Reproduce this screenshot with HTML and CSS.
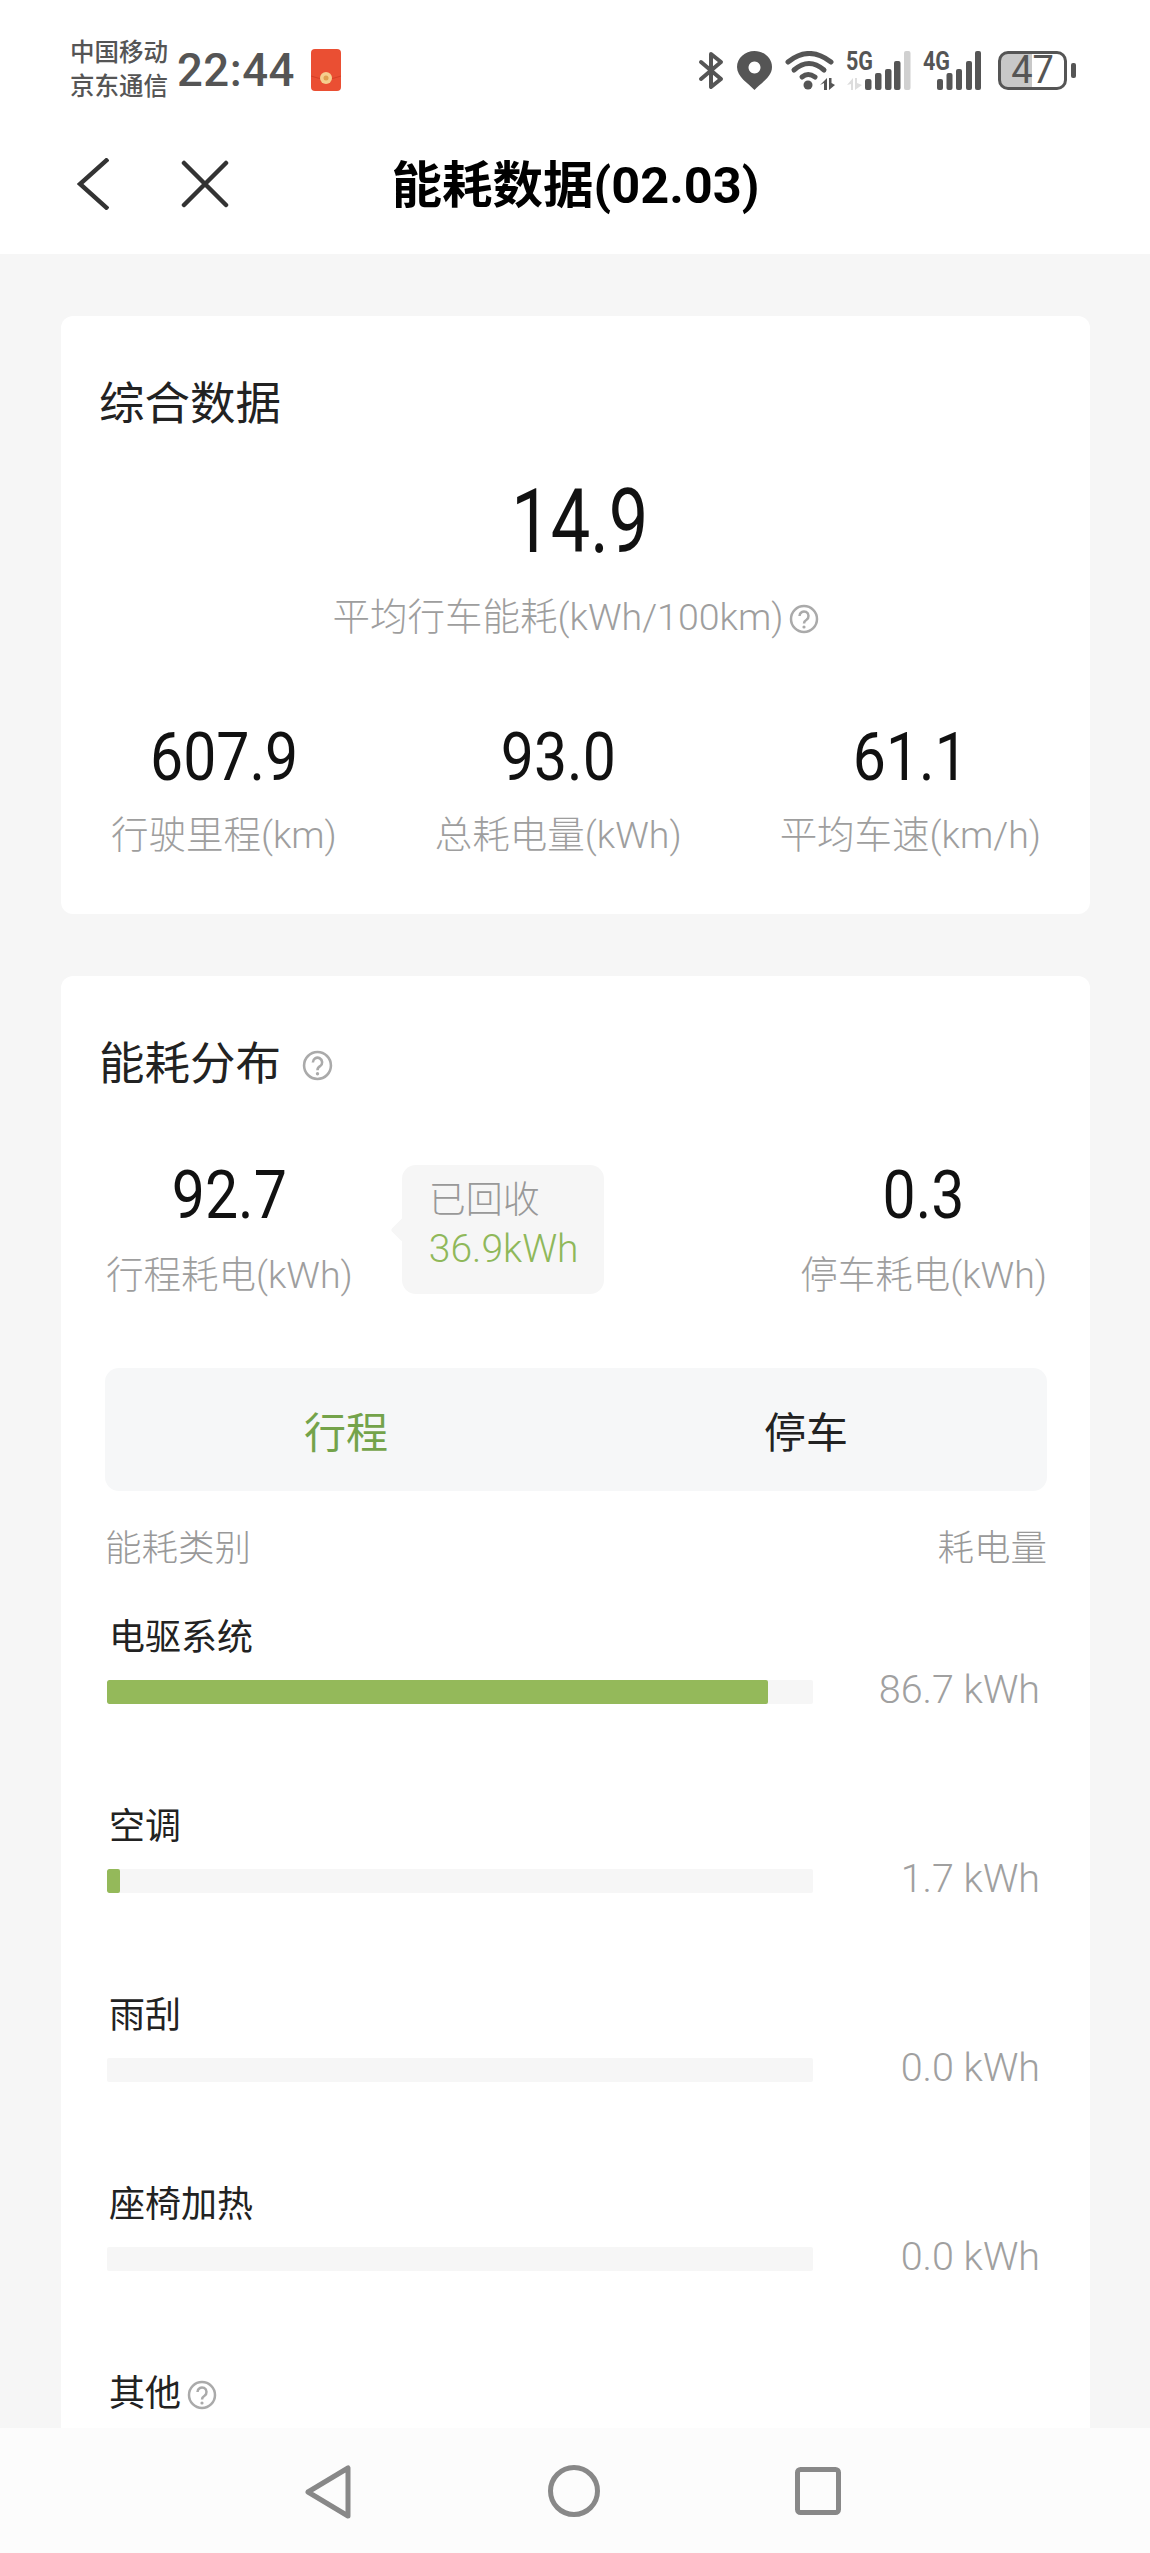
FILE: index.html
```html
<!DOCTYPE html>
<html>
	<head>
		<meta charset="UTF-8">
		<title>能耗数据</title>
		<link rel="stylesheet" href="styles.css">
	</head>
	<body>
		<div class="page">
			<header class="top">
				<div class="statusbar">
					<div class="carrier"><span>中国移动</span><span>京东通信</span></div>
					<div class="time">22:44</div>
					<svg class="envelope" width="30" height="42" viewBox="0 0 30 42">
						<rect width="30" height="42" rx="4" fill="#ea4f33"/>
						<path d="M0 27 Q15 33 30 27" fill="none" stroke="#d63f26" stroke-width="1"/>
						<circle cx="15" cy="29" r="6" fill="#f5cf8e"/>
						<circle cx="15" cy="29" r="2.5" fill="#e0a050"/>
					</svg>
					<div class="status-icons">
						<svg width="26" height="39" viewBox="0 0 26 39"><path d="M3 11 L23 28 L13 36 V3 L23 11 L3 28" fill="none" stroke="#555" stroke-width="4" stroke-linejoin="round" stroke-linecap="round"/></svg>
						<svg class="pin" width="35" height="39" viewBox="0 0 35 39"><path fill-rule="evenodd" fill="#555" d="M17.5 0 C8 0 0 7 0 16 C0 26 11 32 17.5 39 C24 32 35 26 35 16 C35 7 27 0 17.5 0Z M17.5 10.500 a6 6 0 1 0 0.010 0Z"/></svg>
						<svg class="wifi" width="50" height="39" viewBox="0 0 50 39">
							<g fill="none" stroke="#555" stroke-width="5" stroke-linecap="round">
								<path d="M3 11 Q24 -6 46 11"/>
								<path d="M9 19 Q24 6 39 19"/>
								<path d="M17 26 Q23 21 30 26"/>
							</g>
							<circle cx="23" cy="34" r="4.500" fill="#555"/>
							<path fill="#555" d="M42 27 V39 H39 V32 L35 34 Z M44 27 H46.500 V32 L50 34 L44 39 Z"/>
						</svg>
						<svg class="signal" width="66" height="45" viewBox="0 -6 66 45">
							<text x="0" y="19" class="net" textLength="27" lengthAdjust="spacingAndGlyphs">5G</text>
							<path fill="#ddd" d="M7 27 V39 H5 V33 L1 34 Z M9 27 H11 V32 L16 34 L9 39 Z"/>
							<rect x="19" y="28" width="6.500" height="11" rx="2" fill="#555"/>
							<rect x="29" y="22" width="6.500" height="17" rx="2" fill="#555"/>
							<rect x="39" y="18" width="6.500" height="21" rx="2" fill="#555"/>
							<rect x="48" y="10" width="6.500" height="29" rx="2" fill="#555"/>
							<rect x="58" y="0" width="6.500" height="39" rx="2" fill="#d0d0d0"/>
						</svg>
						<svg class="signal" width="60" height="45" viewBox="0 -6 60 45">
							<text x="0" y="19" class="net" textLength="27" lengthAdjust="spacingAndGlyphs">4G</text>
							<rect x="14" y="28" width="6" height="11" rx="2" fill="#555"/>
							<rect x="23.500" y="22" width="6" height="17" rx="2" fill="#555"/>
							<rect x="33" y="18" width="6" height="21" rx="2" fill="#555"/>
							<rect x="43" y="10" width="6" height="29" rx="2" fill="#555"/>
							<rect x="52" y="0" width="6" height="39" rx="2" fill="#555"/>
						</svg>
						<div class="battery"><span>47</span></div>
						<div class="battery-nub"></div>
					</div>
				</div>
				<div class="navbar">
					<div class="nav-icons">
						<svg width="32" height="52" viewBox="0 0 32 52"><path d="M31 1 L3 26 L31 51" fill="none" stroke="#333" stroke-width="4.500"/></svg>
						<svg class="close" width="48" height="48" viewBox="0 0 48 48"><path d="M3 3 L45 45 M45 3 L3 45" fill="none" stroke="#333" stroke-width="4.500" stroke-linecap="round"/></svg>
					</div>
					<h1>能耗数据(02.03)</h1>
				</div>
			</header>

			<main class="content">
				<section class="card summary">
					<h2>综合数据</h2>
					<div class="main-stat">
						<div class="num big"><span>14.9</span></div>
						<div class="label">平均行车能耗(kWh/100km)<svg class="help" viewBox="0 0 30 30"><circle cx="15" cy="15" r="13" fill="none" stroke="#aaa" stroke-width="2.500"/><path d="M10.500 12 a4.500 4.500 0 1 1 7 3.700 q-2.500 1.500 -2.500 3.800" fill="none" stroke="#aaa" stroke-width="2.500"/><circle cx="15" cy="23" r="1.600" fill="#aaa"/></svg></div>
					</div>
					<div class="stats">
						<div class="stat">
							<div class="num"><span>607.9</span></div>
							<div class="label">行驶里程(km)</div>
						</div>
						<div class="stat">
							<div class="num"><span>93.0</span></div>
							<div class="label">总耗电量(kWh)</div>
						</div>
						<div class="stat">
							<div class="num"><span>61.1</span></div>
							<div class="label">平均车速(km/h)</div>
						</div>
					</div>
				</section>

				<section class="card">
					<h2>能耗分布<svg class="help title-help" viewBox="0 0 30 30"><circle cx="15" cy="15" r="13" fill="none" stroke="#aaa" stroke-width="2.500"/><path d="M10.500 12 a4.500 4.500 0 1 1 7 3.700 q-2.500 1.500 -2.500 3.800" fill="none" stroke="#aaa" stroke-width="2.500"/><circle cx="15" cy="23" r="1.600" fill="#aaa"/></svg></h2>
					<div class="split">
						<div class="stat">
							<div class="num"><span>92.7</span></div>
							<div class="label">行程耗电(kWh)</div>
						</div>
						<div class="recovered">
							<div class="recovered-title">已回收</div>
							<div class="recovered-value">36.9kWh</div>
						</div>
						<div class="stat parked">
							<div class="num"><span>0.3</span></div>
							<div class="label">停车耗电(kWh)</div>
						</div>
					</div>
					<div class="tabs">
						<div class="tab active">行程</div>
						<div class="tab">停车</div>
					</div>
					<div class="list-head"><span>能耗类别</span><span>耗电量</span></div>

					<div class="row">
						<div class="row-name">电驱系统</div>
						<div class="row-data">
							<div class="bar"><div class="fill" style="width:93.6%"></div></div>
							<div class="row-value">86.7 kWh</div>
						</div>
					</div>
					<div class="row">
						<div class="row-name">空调</div>
						<div class="row-data">
							<div class="bar"><div class="fill" style="width:1.8%"></div></div>
							<div class="row-value">1.7 kWh</div>
						</div>
					</div>
					<div class="row">
						<div class="row-name">雨刮</div>
						<div class="row-data">
							<div class="bar"></div>
							<div class="row-value">0.0 kWh</div>
						</div>
					</div>
					<div class="row">
						<div class="row-name">座椅加热</div>
						<div class="row-data">
							<div class="bar"></div>
							<div class="row-value">0.0 kWh</div>
						</div>
					</div>
					<div class="row">
						<div class="row-name">其他<svg class="help" viewBox="0 0 30 30"><circle cx="15" cy="15" r="13" fill="none" stroke="#aaa" stroke-width="2.500"/><path d="M10.500 12 a4.500 4.500 0 1 1 7 3.700 q-2.500 1.500 -2.500 3.800" fill="none" stroke="#aaa" stroke-width="2.500"/><circle cx="15" cy="23" r="1.600" fill="#aaa"/></svg></div>
					</div>
				</section>
			</main>

			<footer class="navkeys">
				<svg width="46" height="54" viewBox="0 0 46 54"><path d="M43 3 V51 L3 27 Z" fill="none" stroke="#888" stroke-width="5" stroke-linejoin="round"/></svg>
				<svg width="52" height="52" viewBox="0 0 52 52"><circle cx="26" cy="26" r="23.500" fill="none" stroke="#888" stroke-width="5"/></svg>
				<svg width="46" height="48" viewBox="0 0 46 48"><rect x="2.500" y="2.500" width="41" height="43" rx="3" fill="none" stroke="#888" stroke-width="5"/></svg>
			</footer>
		</div>
	</body>
</html>
```

FILE: styles.css
```css
* { box-sizing: border-box; }
body, html {
	margin: 0;
	padding: 0;
	background: #f6f6f6;
	font-family: Roboto, "Noto Sans CJK SC", sans-serif;
}
h1, h2 { margin: 0; font-weight: 400; }

.page {
	width: 1150px;
	height: 2553px;
	display: flex;
	flex-direction: column;
	overflow: hidden;
}

/* top */
.top { background: #fff; height: 254px; flex: none; }
.statusbar {
	height: 114px;
	padding: 36px 74px 10px 70px;
	display: flex;
	align-items: center;
	color: #555;
}
.carrier {
	display: flex;
	flex-direction: column;
	font-size: 24.500px;
	line-height: 34px;
	font-weight: 500;
	white-space: nowrap;
}
.time { font-size: 45.500px; font-weight: 500; margin-left: 9px; letter-spacing: .5px; }
.envelope { margin-left: 16px; }
.status-icons { margin-left: auto; display: flex; align-items: center; }
.pin { margin-left: 13px; }
.wifi { margin-left: 13px; }
.signal { margin: -6px 0 0 11px; }
.net { font: 700 25px Roboto, sans-serif; fill: #555; }
.battery {
	width: 69px;
	height: 39px;
	margin-left: 15px;
	border: 3.500px solid #555;
	border-radius: 10px;
	background: linear-gradient(to right, #c8c8c8 49%, transparent 49%);
	font-size: 38px;
	line-height: 32px;
	text-align: center;
}
.battery-nub { width: 5px; height: 15px; margin-left: 4px; background: #555; border-radius: 2px; }

.navbar {
	height: 140px;
	display: grid;
	grid-template-columns: 1fr auto 1fr;
	align-items: center;
	padding-left: 77px;
}
.nav-icons { display: flex; align-items: center; }
.close { margin-left: 72px; }
.navbar h1 { font-size: 50.500px; font-weight: 700; color: #000; margin: 0 76px 6px 0; }

/* cards */
.content { flex: 1; min-height: 0; overflow: hidden; padding: 62px 60px 0 61px; }
.card { background: #fff; border-radius: 12px; padding: 59px 43px 54px 44px; }
.card + .card { margin-top: 62px; }
.card h2 {
	font-size: 45.500px;
	line-height: 60px;
	color: #222;
	margin-left: -6px;
	display: flex;
	align-items: center;
}

.num { line-height: 80px; color: #111; text-align: center; font-size: 67px; }
.num span { display: inline-block; transform: scaleX(.88); }
.num.big { line-height: 100px; font-size: 89px; padding-left: 8px; }
.num.big span { transform: scaleX(.79); }
.label { font-size: 37.500px; line-height: 50px; font-weight: 300; color: #9e9e9e; white-space: nowrap; text-align: center; }

.help { width: 30px; height: 30px; display: inline-block; vertical-align: -4px; margin-left: 6px; }
.title-help { margin-left: 21px; width: 31px; height: 31px; }

.main-stat { margin-top: 37px; }
.main-stat .label { margin-top: 20px; }
.stats { margin-top: 75px; padding: 0 6px; display: flex; justify-content: space-between; }
.stat .label { margin-top: 13px; }
.split .stat .label { margin-top: 15px; }

.split { margin-top: 60px; display: flex; align-items: flex-start; padding-left: 1px; }
.recovered {
	position: relative;
	width: 202px;
	height: 129px;
	margin: 10px 0 0 49px;
	padding: 12px 0 0 27px;
	background: #f6f6f6;
	border-radius: 14px;
	font-size: 37px;
	line-height: 48px;
	font-weight: 300;
}
.recovered::before {
	content: "";
	position: absolute;
	left: -8px;
	top: 56px;
	width: 18px;
	height: 18px;
	background: #f6f6f6;
	border-radius: 3px;
	transform: rotate(45deg);
}
.recovered-title { color: #999; }
.recovered-value { color: #8fb85a; font-size: 39px; }
.parked { margin-left: auto; }

.tabs {
	margin-top: 68px;
	height: 123px;
	padding: 0 11px;
	background: #f6f7f8;
	border-radius: 14px;
	display: flex;
	align-items: center;
}
.tab { flex: 1; text-align: center; font-size: 42px; color: #222; }
.tab.active { color: #74a34a; }

.list-head {
	margin-top: 33px;
	display: flex;
	justify-content: space-between;
	font-size: 36.500px;
	line-height: 50px;
	font-weight: 300;
	color: #999;
}

.row { padding: 0 7px 0 2px; margin-top: 39px; margin-bottom: 98px; }
.row + .row { margin-top: 0; }
.row-name { font-size: 36px; line-height: 50px; color: #222; margin-bottom: 17px; padding-left: 2px; }
.row-data { height: 24px; display: flex; align-items: center; justify-content: space-between; }
.bar { width: 706px; height: 24px; background: #f6f6f6; border-radius: 2px; overflow: hidden; }
.fill { height: 100%; background: #94b95a; border-radius: 2px; }
.row-value { font-size: 39.500px; line-height: 40px; padding-bottom: 4px; font-weight: 300; color: #a0a0a0; white-space: nowrap; }

/* bottom keys */
.navkeys {
	flex: none;
	height: 125px;
	background: #fcfcfc;
	display: flex;
	align-items: flex-start;
	padding: 37px 0 0 305px;
}
.navkeys svg:nth-child(2) { margin-left: 197px; }
.navkeys svg:nth-child(3) { margin-left: 195px; margin-top: 2px; }
```
